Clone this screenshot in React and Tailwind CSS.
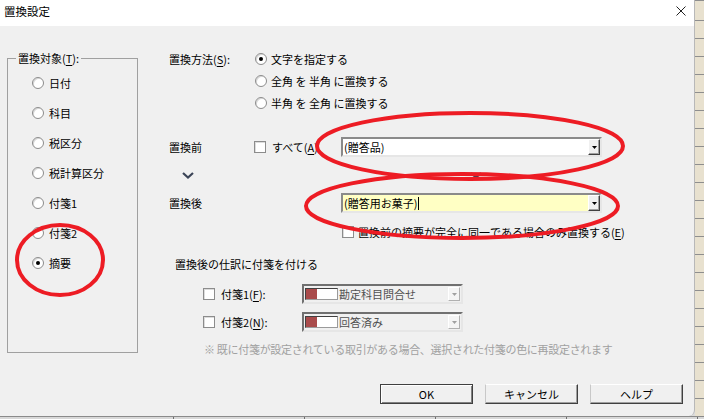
import React from "react";

const Radio = ({ checked }) => (
  <span className="w-[12px] h-[12px] rounded-full border border-[#8c8c8c] bg-white flex items-center justify-center shrink-0 shadow-[inset_1px_1px_0_#d8d8d8]">
    {checked && <span className="w-[4px] h-[4px] rounded-full bg-black" />}
  </span>
);

const Check = () => (
  <span className="w-[12px] h-[12px] border border-[#8c8c8c] bg-white shrink-0 shadow-[inset_1px_1px_0_#dcdcdc]" />
);

const U = ({ children }) => <span className="underline underline-offset-2">{children}</span>;

const DropBtn = ({ disabled }) => (
  <div
    className={
      "w-[12px] h-full flex items-center justify-center border border-t-white border-l-white shrink-0 " +
      (disabled ? "border-r-[#b0b0b0] border-b-[#b0b0b0] bg-[#f4f4f4]" : "border-r-[#404040] border-b-[#404040] bg-[#f0f0f0] shadow-[inset_-1px_-1px_0_#a0a0a0]")
    }
  >
    <svg width="5" height="3" viewBox="0 0 5 3">
      <path d="M0 0H5L2.5 3Z" fill={disabled ? "#a0a0a0" : "#000"} />
    </svg>
  </div>
);

const Combo = ({ children, yellow }) => (
  <div
    className={
      "w-[261px] h-[20px] flex items-stretch border-2 border-t-[#8a8a8a] border-l-[#8a8a8a] border-r-[#e6e6e6] border-b-[#e6e6e6] " +
      (yellow ? "bg-[#ffffc4]" : "bg-white")
    }
  >
    <div className="flex-1 flex items-center pl-[1px] text-black">{children}</div>
    <DropBtn />
  </div>
);

const TagCombo = ({ label }) => (
  <div className="w-[161px] h-[20px] flex items-stretch border-2 border-t-[#707070] border-l-[#707070] border-r-[#e6e6e6] border-b-[#e6e6e6] bg-[#f0f0f0]">
    <div className="flex-1 flex items-center pl-[1px]">
      <div className="flex h-[12px] border border-t-[#404040] border-l-[#404040] border-r-[#9a9a9a] border-b-[#9a9a9a]">
        <div className="w-[11px] bg-[#a94b4b]" />
        <div className="w-[20px] bg-white" />
      </div>
      <span className="ml-[1px] text-[#505050]">{label}</span>
    </div>
    <div className="py-[1px] pr-[1px]">
      <DropBtn disabled />
    </div>
  </div>
);

const Chevron = () => (
  <svg width="12" height="7" viewBox="0 0 12 7">
    <path d="M1 1L6 5.5L11 1" fill="none" stroke="#3b4457" strokeWidth="2.2" />
  </svg>
);

const Button = ({ children, primary }) => (
  <button
    className={
      "w-[93px] h-[20px] flex items-center justify-center bg-[#f0f0f0] text-black " +
      (primary
        ? "border border-[#404040] shadow-[inset_1px_1px_0_#ffffff,inset_-1px_-1px_0_#808080]"
        : "border border-t-white border-l-[#c8c8c8] border-r-[#404040] border-b-[#404040] shadow-[inset_-1px_-1px_0_#a0a0a0]")
    }
  >
    {children}
  </button>
);

export default function App() {
  const targets = ["日付", "科目", "税区分", "税計算区分", "付箋1", "付箋2", "摘要"];
  return (
    <div className="w-[704px] h-[419px] overflow-hidden relative flex flex-col bg-[#dcdcdc] font-['Noto_Sans_CJK_JP','Noto_Sans',sans-serif] text-[11px] leading-[14px] text-black">
      <div className="flex h-[416px]">
        <div className="w-[695px] h-[416px] flex flex-col bg-[#f0f0f0] rounded-br-[6px] border-r border-[#b8b8b8]">
          {/* title bar */}
          <div className="h-[26px] bg-white flex items-start justify-between shrink-0">
            <span className="pl-[4px] pt-[4px] text-[11.5px]">置換設定</span>
            <svg className="mt-[6px] mr-[8px]" width="10" height="10" viewBox="0 0 10 10">
              <path d="M0.5 0.5L9.5 9.5M9.5 0.5L0.5 9.5" stroke="#222" strokeWidth="1" />
            </svg>
          </div>

          {/* body */}
          <div className="h-[330px] flex shrink-0">
            {/* left group */}
            <div className="pl-[7px] pt-[25px]">
              <fieldset className="w-[131px] h-[302px] border border-[#a0a0a0]">
                <legend className="ml-[8px] px-[2px] leading-[14px]">
                  置換対象(<U>T</U>):
                </legend>
                <div className="pt-[3px] pl-[24px] flex flex-col">
                  {targets.map((t) => (
                    <div key={t} className="h-[30px] flex items-center gap-[5px]">
                      <Radio checked={t === "摘要"} />
                      <span>{t}</span>
                    </div>
                  ))}
                </div>
              </fieldset>
            </div>

            {/* right panel */}
            <div className="ml-[31px] pt-[22px] flex flex-col">
              <div className="flex">
                <div className="w-[86px] h-[22px] flex items-center">
                  置換方法(<U>S</U>):
                </div>
                <div className="flex flex-col">
                  <div className="h-[22px] flex items-center gap-[4px]">
                    <Radio checked />
                    <span>文字を指定する</span>
                  </div>
                  <div className="h-[22px] flex items-center gap-[4px]">
                    <Radio />
                    <span>全角 を 半角 に置換する</span>
                  </div>
                  <div className="h-[22px] flex items-center gap-[4px]">
                    <Radio />
                    <span>半角 を 全角 に置換する</span>
                  </div>
                </div>
              </div>

              <div className="mt-[23px] h-[20px] flex items-center">
                <div className="w-[85px]">置換前</div>
                <div className="w-[87px] flex items-center gap-[6px]">
                  <Check />
                  <span>
                    すべて(<U>A</U>)
                  </span>
                </div>
                <Combo>(贈答品)</Combo>
              </div>

              <div className="h-[36px] flex items-center">
                <div className="w-[172px] pl-[13px] flex">
                  <Chevron />
                </div>
                <div className="w-[261px] flex justify-center pl-[8px]">
                  <Chevron />
                </div>
              </div>

              <div className="h-[20px] flex items-center">
                <div className="w-[172px]">置換後</div>
                <Combo yellow>
                  <span>(贈答用お菓子)</span>
                  <span className="w-[1px] h-[13px] bg-black ml-[1px]" />
                </Combo>
              </div>

              <div className="mt-[12px] h-[14px] flex items-center pl-[173px] gap-[4px]">
                <Check />
                <span>
                  置換前の摘要が完全に同一である場合のみ置換する(<U>E</U>)
                </span>
              </div>

              <div className="mt-[18px] h-[14px] flex items-center pl-[6px]">置換後の仕訳に付箋を付ける</div>

              <div className="mt-[13px] h-[20px] flex items-center pl-[34px]">
                <div className="w-[99px] flex items-center gap-[6px]">
                  <Check />
                  <span>
                    付箋1(<U>F</U>):
                  </span>
                </div>
                <TagCombo label="勘定科目問合せ" />
              </div>

              <div className="mt-[8px] h-[20px] flex items-center pl-[34px]">
                <div className="w-[99px] flex items-center gap-[6px]">
                  <Check />
                  <span>
                    付箋2(<U>N</U>):
                  </span>
                </div>
                <TagCombo label="回答済み" />
              </div>

              <div className="mt-[10px] h-[14px] flex items-center pl-[35px] text-[#a0a0a0] tracking-[-0.3px]">
                ※ 既に付箋が設定されている取引がある場合、選択された付箋の色に再設定されます
              </div>
            </div>
          </div>

          {/* buttons */}
          <div className="mt-[28px] flex justify-end gap-[12px] pr-[11px]">
            <Button primary>OK</Button>
            <Button>キャンセル</Button>
            <Button>ヘルプ</Button>
          </div>
        </div>
        <div className="flex-1 bg-[repeating-linear-gradient(to_bottom,#e8e1cf_0px,#e8e1cf_17px,#8e8e8e_17px,#8e8e8e_18px)] bg-[position:0_3px]" />
      </div>
      <div className="h-[3px] bg-[repeating-linear-gradient(to_right,#d8d8d8_0px,#d8d8d8_130px,#707070_130px,#707070_131px)] bg-[position:43px_0] border-t border-[#8a8a8a]" />

      {/* red annotation ellipses */}
      <svg className="absolute inset-0 pointer-events-none" width="704" height="419" viewBox="0 0 704 419">
        <ellipse cx="470" cy="146" rx="153" ry="33" fill="none" stroke="#ed1c24" strokeWidth="4" />
        <ellipse cx="462" cy="206" rx="156" ry="32" fill="none" stroke="#ed1c24" strokeWidth="4" />
        <ellipse cx="60" cy="260" rx="43" ry="35" fill="none" stroke="#ed1c24" strokeWidth="4" />
      </svg>
    </div>
  );
}
